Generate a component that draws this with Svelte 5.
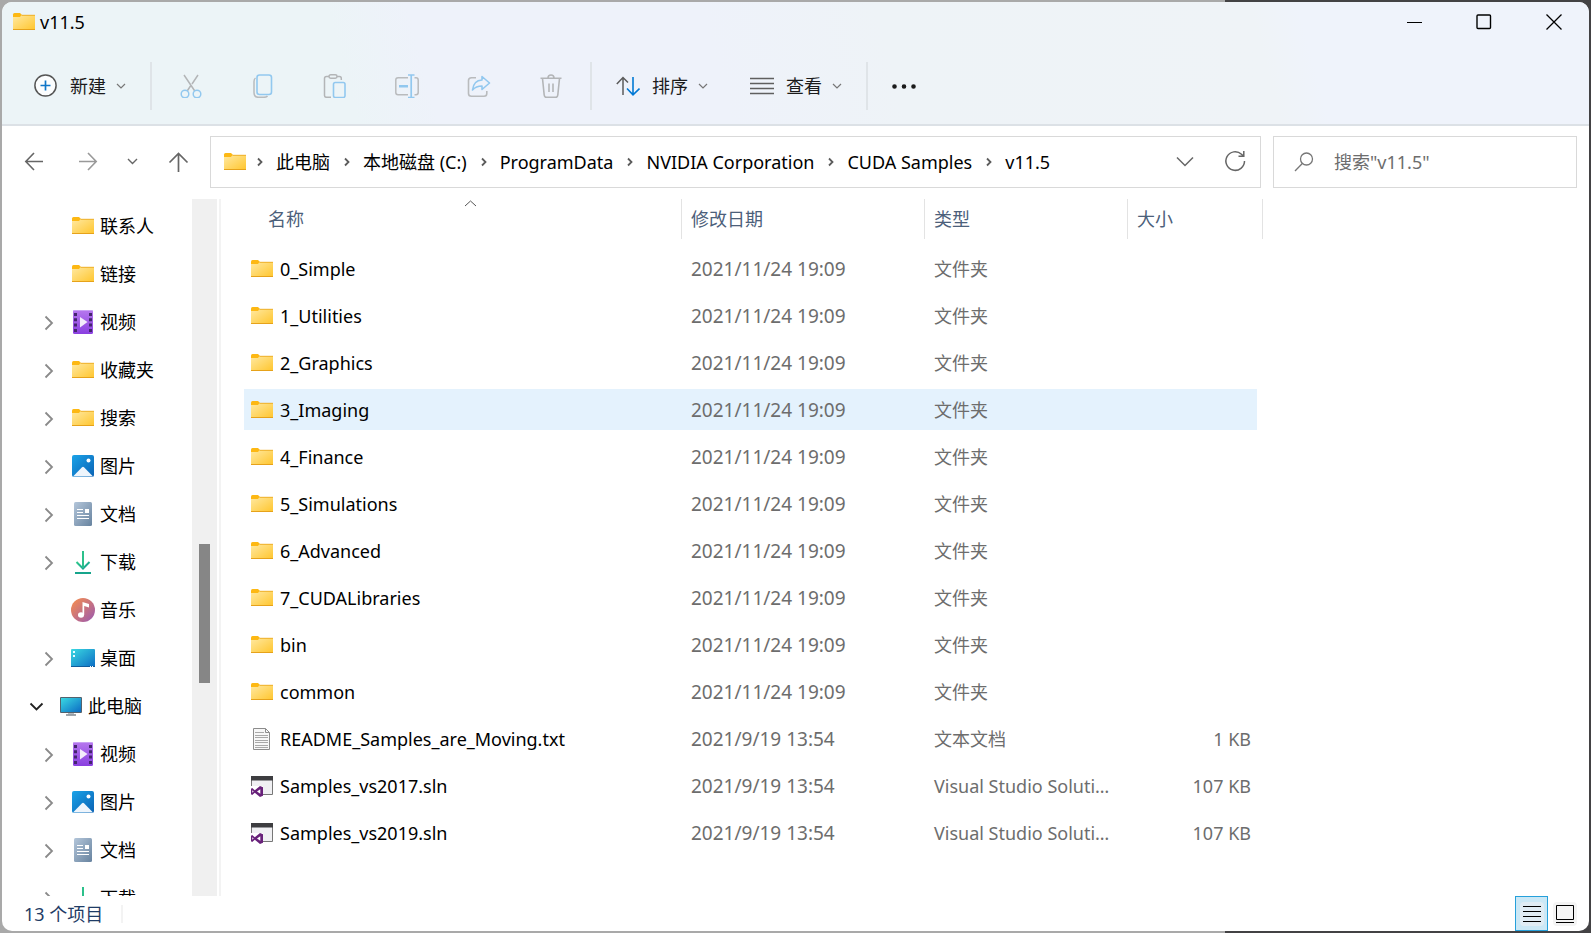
<script>
	const path = ['此电脑', '本地磁盘 (C:)', 'ProgramData', 'NVIDIA Corporation', 'CUDA Samples', 'v11.5']

	const tree = [
		{ name: '联系人', icon: 'folder', level: 1, state: 'leaf' },
		{ name: '链接', icon: 'folder', level: 1, state: 'leaf' },
		{ name: '视频', icon: 'video', level: 1, state: 'closed' },
		{ name: '收藏夹', icon: 'folder', level: 1, state: 'closed' },
		{ name: '搜索', icon: 'folder', level: 1, state: 'closed' },
		{ name: '图片', icon: 'picture', level: 1, state: 'closed' },
		{ name: '文档', icon: 'document', level: 1, state: 'closed' },
		{ name: '下载', icon: 'download', level: 1, state: 'closed' },
		{ name: '音乐', icon: 'music', level: 1, state: 'leaf' },
		{ name: '桌面', icon: 'desktop', level: 1, state: 'closed' },
		{ name: '此电脑', icon: 'pc', level: 0, state: 'open' },
		{ name: '视频', icon: 'video', level: 1, state: 'closed' },
		{ name: '图片', icon: 'picture', level: 1, state: 'closed' },
		{ name: '文档', icon: 'document', level: 1, state: 'closed' },
		{ name: '下载', icon: 'download', level: 1, state: 'closed' }
	]

	const folders = [
		'0_Simple',
		'1_Utilities',
		'2_Graphics',
		'3_Imaging',
		'4_Finance',
		'5_Simulations',
		'6_Advanced',
		'7_CUDALibraries',
		'bin',
		'common'
	]

	const files = [
		...folders.map((name) => ({ name, icon: 'folder', date: '2021/11/24 19:09', type: '文件夹', size: '' })),
		{ name: 'README_Samples_are_Moving.txt', icon: 'text', date: '2021/9/19 13:54', type: '文本文档', size: '1 KB' },
		{ name: 'Samples_vs2017.sln', icon: 'sln', date: '2021/9/19 13:54', type: 'Visual Studio Solution', size: '107 KB' },
		{ name: 'Samples_vs2019.sln', icon: 'sln', date: '2021/9/19 13:54', type: 'Visual Studio Solution', size: '107 KB' }
	]

	const tools = [
		{ icon: 'cut', label: '剪切' },
		{ icon: 'copy', label: '复制' },
		{ icon: 'paste', label: '粘贴' },
		{ icon: 'rename', label: '重命名' },
		{ icon: 'share', label: '共享' },
		{ icon: 'trash', label: '删除' }
	]

	let active = $state('3_Imaging')
	let query = $state('')
</script>

{#snippet icon(name)}
	<svg class="icon" width="24" height="24" viewBox="0 0 24 24" fill="none" aria-hidden="true">
		{#if name === 'folder'}
			<path d="M1 4.500Q1 3 2.500 3H8L10 5V9H1Z" fill="#fdb813" />
			<path d="M1 7H8L9.500 5H22.500Q23 5 23 5.500V19.500H1Z" fill="url(#g-folder)" />
			<path d="M9.500 5.300H23" stroke="#eeb02a" />
			<path d="M1 19.500H23" stroke="#e6a21a" />
		{:else if name === 'video'}
			<rect x="2" width="20" height="24" rx="1.500" fill="url(#g-video)" />
			<path d="M2.500 .5H21.500" stroke="#c9a0f5" />
			<path d="M4.500 3V22M19.500 3V22" stroke="#44256f" stroke-width="3" stroke-dasharray="3 2.300" />
			<path d="M9 7V17.500L16.500 12Z" fill="#f3ecfb" />
		{:else if name === 'picture'}
			<rect x="1" y="1" width="22" height="22" rx="2" fill="url(#g-picture)" />
			<path d="M2 22.500L11 13.300Q12 12.300 13 13.300L22 22.500Z" fill="#eef5fc" />
			<circle cx="17.500" cy="6.500" r="2" fill="#fff" />
		{:else if name === 'document'}
			<rect x="3" width="18" height="24" rx="1.500" fill="url(#g-document)" />
			<path d="M6 7.500H12M6 10.500H12M6 13.500H18M6 16.500H18" stroke="#fff" />
			<path d="M14 7H18V11H14Z" fill="#fff" />
		{:else if name === 'download'}
			<path d="M5.500 12L12 18.500L18.500 12" stroke="url(#g-download)" stroke-width="2" />
			<path d="M11 1H13V18H11Z" fill="#2cc08b" />
			<path d="M4 23H20" stroke="#16a58c" stroke-width="2" />
		{:else if name === 'music'}
			<circle cx="12" cy="12" r="12" fill="url(#g-music)" />
			<ellipse cx="10" cy="17" rx="3" ry="2.700" fill="#fff" />
			<path d="M11.500 4L18 6V9.500L13.200 8V17H11.500Z" fill="#fff" />
		{:else if name === 'desktop'}
			<rect y="3" width="24" height="18" rx="1" fill="url(#g-screen)" />
			<path d="M2 5h2v2H2zM2 9h2v2H2z" fill="#e8fbff" />
			<path d="M0 20.500H24" stroke="#0f5c9c" />
			<path d="M19 20.500H23" stroke="#fff" stroke-dasharray="1 1" />
		{:else if name === 'pc'}
			<rect x="1" y="3" width="22" height="16" rx="1" fill="#53626e" />
			<rect x="2" y="4" width="20" height="14" fill="url(#g-screen)" />
			<path d="M9 19H15V20.500H9Z" fill="#b3bac0" />
			<path d="M7 21H17" stroke="#7f8991" stroke-width="1.500" />
		{:else if name === 'text'}
			<path d="M3.500 1.500H15.500L19.500 5.500V22.500H3.500Z" fill="#f7f7f7" stroke="#8c8c8c" />
			<path d="M15.500 1.500V5.500H19.500" stroke="#8c8c8c" />
			<path d="M5 5.500H14M5 8.500H18M5 10.500H18M5 13.500H18M5 15.500H18M5 18.500H18M5 20.500H18" stroke="#a8a8a8" />
		{:else if name === 'sln'}
			<path d="M1.500 2.500H22.500V20.500H1.500Z" fill="#f0f0f3" stroke="#777" />
			<path d="M1 2H23V6.500H1Z" fill="#3d3d40" />
			<path d="M0 12H13V24H0Z" fill="#fff" />
			<path d="M10 12L13 13.300V21.700L10 23L4.800 18.800L2.200 21L1 20.300V14.700L2.200 14L4.800 16.200Z" fill="#68217a" />
			<path d="M10.300 15.200V19.800L7 17.500ZM2.300 16.200V18.800L3.700 17.500Z" fill="#fff" />
		{:else if name === 'cut'}
			<path d="M5 1L15.800 17M19 1L13 10M11.500 12L8.200 17" stroke="#b3b5b7" stroke-width="1.500" />
			<circle cx="6" cy="20" r="3.800" stroke="#92c8ef" stroke-width="1.500" />
			<circle cx="18" cy="20" r="3.800" stroke="#92c8ef" stroke-width="1.500" />
		{:else if name === 'copy'}
			<path d="M4.500 4Q3 5 3 7.500V18.500Q3 23.300 7.500 23.300H13Q15.500 23.300 16.500 22" stroke="#b9bbbd" stroke-width="1.500" />
			<rect x="6" y="1" width="14.500" height="19.500" rx="2.500" stroke="#92c8ef" stroke-width="1.600" />
		{:else if name === 'paste'}
			<path d="M6 2.500H3.500Q1.500 2.500 1.500 4.500V21.500Q1.500 23.300 3.500 23.300H8M14 2.500H16.500Q18.300 2.500 18.300 4.500V6" stroke="#b3b5b7" stroke-width="1.500" />
			<rect x="6" y=".8" width="8" height="3.400" rx="1.700" stroke="#b3b5b7" stroke-width="1.500" />
			<rect x="10.500" y="8.500" width="11.500" height="15" rx="1.700" stroke="#92c8ef" stroke-width="1.600" />
		{:else if name === 'rename'}
			<path d="M13 3.800H3Q.8 3.800 .8 6V18.500Q.8 20.700 3 20.700H13M19.500 3.800H21Q23.200 3.800 23.200 6V18.500Q23.200 20.700 21 20.700H19.500" stroke="#b9bbbd" stroke-width="1.500" />
			<path d="M16.200 1V24M13 1H19.500M13 23.500H19.500" stroke="#92c8ef" stroke-width="1.700" />
			<path d="M4 12.200H13" stroke="#92c8ef" stroke-width="2.600" />
		{:else if name === 'share'}
			<path d="M9 3.800H4.500Q1.500 3.800 1.500 6.500V19.500Q1.500 22.300 4.500 22.300H17Q19.800 22.300 19.800 19.500V17" stroke="#b9bbbd" stroke-width="1.600" />
			<path d="M15 2.500L22.500 9L15 15.500V12Q9 12 5.500 16Q6.500 6.500 15 6Z" stroke="#92c8ef" stroke-width="1.600" stroke-linejoin="round" />
		{:else if name === 'trash'}
			<path d="M1.500 4.300H22.500M9 4Q9 1 12 1Q15 1 15 4M3.500 4.500L5.200 21Q5.500 23.400 7.500 23.400H16.500Q18.500 23.400 18.800 21L20.500 4.500M10 9.500V18M14 9.500V18" stroke="#b3b5b7" stroke-width="1.600" />
		{:else if name === 'new'}
			<circle cx="11.500" cy="11.500" r="10.600" fill="#fbfdfe" stroke="#555" stroke-width="1.500" />
			<path d="M11.500 6.500V16.500M6.500 11.500H16.500" stroke="#0f76c8" stroke-width="1.700" />
		{:else if name === 'sort'}
			<path d="M7 21V3.500M.8 10L7 3.500L12 8.500" stroke="#5b5b5b" stroke-width="1.500" />
			<path d="M17 3V21M11 14.500L17 20.800L23.500 14.500" stroke="#0078d4" stroke-width="1.600" />
		{:else if name === 'view'}
			<path d="M0 4.500H24M0 9.500H24M0 14.500H24M0 19.500H24" stroke="#5f5f5f" stroke-width="1.500" />
		{:else if name === 'more'}
			<path d="M2.500 12.500h.01M12 12.500h.01M21.500 12.500h.01" stroke="#1b1b1b" stroke-width="4.600" stroke-linecap="round" />
		{:else if name === 'back'}
			<path d="M21 11.500H4M12 3L3.800 11.500L12 20" stroke="#666" stroke-width="1.600" />
		{:else if name === 'forward'}
			<path d="M3 11.500H20M12 3L20.200 11.500L12 20" stroke="#999" stroke-width="1.600" />
		{:else if name === 'up'}
			<path d="M12.500 22V3.500M3.500 12.500L12.500 3.500L21.500 12.500" stroke="#666" stroke-width="1.700" />
		{:else if name === 'refresh'}
			<path d="M21.500 11A9.300 9.300 0 1 1 18.500 4.200L20.500 6M20.800 1V6.200H15.500" stroke="#666" stroke-width="1.500" />
		{:else if name === 'search'}
			<circle cx="14.500" cy="9" r="6" stroke="#777" stroke-width="1.300" />
			<path d="M10.300 13.500L3 21" stroke="#777" stroke-width="1.300" />
		{:else if name === 'closed'}
			<path d="M8.500 6.500L15 13L8.500 19.500" stroke="#8a8a8a" stroke-width="1.800" />
		{:else if name === 'open'}
			<path d="M5.500 9.500L11.500 15.500L17.500 9.500" stroke="#222" stroke-width="1.800" />
		{:else if name === 'details'}
			<path d="M3 4.500H21M3 9.500H21M3 14.500H21M3 19.500H21" stroke="#000" />
		{:else if name === 'tiles'}
			<path d="M3.500 3.500H20.500V17.500H3.500Z" stroke="#000" fill="#f6f6f6" />
			<path d="M3 20.500H21" stroke="#000" />
		{/if}
	</svg>
{/snippet}

{#snippet caret()}
	<svg width="10" height="10" viewBox="0 0 10 10" fill="none" aria-hidden="true">
		<path d="M1 3L5 7L9 3" stroke="#777" stroke-width="1.200" />
	</svg>
{/snippet}

<svg class="defs" width="0" height="0" aria-hidden="true">
	<defs>
		<linearGradient id="g-folder" x2="1" y2="1">
			<stop stop-color="#ffe9a2" />
			<stop offset="1" stop-color="#ffc62f" />
		</linearGradient>
		<linearGradient id="g-video" x2="0" y2="1">
			<stop stop-color="#b678ee" />
			<stop offset="1" stop-color="#8a3fe0" />
		</linearGradient>
		<linearGradient id="g-picture" x2="1" y2="1">
			<stop stop-color="#1ba3e8" />
			<stop offset="1" stop-color="#0a62b4" />
		</linearGradient>
		<linearGradient id="g-document" x2="1" y2="1">
			<stop stop-color="#b4c6da" />
			<stop offset="1" stop-color="#67839f" />
		</linearGradient>
		<linearGradient id="g-download" x2="1" y2="1">
			<stop stop-color="#2fc98b" />
			<stop offset="1" stop-color="#129b94" />
		</linearGradient>
		<linearGradient id="g-music" x1=".1" y1=".1" x2=".9" y2=".9">
			<stop stop-color="#f08a55" />
			<stop offset="1" stop-color="#a25da8" />
		</linearGradient>
		<linearGradient id="g-screen" x2="1" y2="1">
			<stop stop-color="#3ad9e2" />
			<stop offset="1" stop-color="#0c6cc4" />
		</linearGradient>
	</defs>
</svg>

<div class="backdrop">
	<div class="window">
		<header>
			<div class="titlebar">
				{@render icon('folder')}
				<span class="title">v11.5</span>
				<button class="caption" aria-label="最小化">
					<svg width="16" height="16" viewBox="0 0 16 16"><path d="M1 8.500H16" stroke="#000" /></svg>
				</button>
				<button class="caption" aria-label="最大化">
					<svg width="16" height="16" viewBox="0 0 16 16" fill="none">
						<rect x="1" y="1" width="13.500" height="13.500" rx="1" stroke="#000" stroke-width="1.400" />
					</svg>
				</button>
				<button class="caption" aria-label="关闭">
					<svg width="16" height="16" viewBox="0 0 16 16">
						<path d="M.5 .5L15.500 15.500M15.500 .5L.5 15.500" stroke="#000" stroke-width="1.300" />
					</svg>
				</button>
			</div>

			<div class="toolbar">
				<button class="command">{@render icon('new')}<span>新建</span>{@render caret()}</button>
				<div class="separator"></div>
				{#each tools as tool}
					<button class="tool" aria-label={tool.label} disabled>{@render icon(tool.icon)}</button>
				{/each}
				<div class="separator"></div>
				<button class="command">{@render icon('sort')}<span>排序</span>{@render caret()}</button>
				<button class="command">{@render icon('view')}<span>查看</span>{@render caret()}</button>
				<div class="separator"></div>
				<button class="command" aria-label="查看更多">{@render icon('more')}</button>
			</div>
		</header>

		<div class="navigation">
			<button class="nav" aria-label="返回">{@render icon('back')}</button>
			<button class="nav" aria-label="前进">{@render icon('forward')}</button>
			<button class="nav recent" aria-label="最近浏览的位置">
				<svg width="12" height="12" viewBox="0 0 12 12" fill="none">
					<path d="M1 3L5.500 7.500L10 3" stroke="#666" stroke-width="1.400" />
				</svg>
			</button>
			<button class="nav" aria-label="上移">{@render icon('up')}</button>

			<nav class="address">
				{@render icon('folder')}
				<ol>
					{#each path as part}
						<li>
							<svg width="6" height="10" viewBox="0 0 6 10" fill="none" aria-hidden="true">
								<path d="M1 1.500L4.500 5L1 8.500" stroke="#5c5c5c" stroke-width="1.800" />
							</svg>
							<a href="#{part}">{part}</a>
						</li>
					{/each}
				</ol>
				<button class="address-button" aria-label="以前的位置">
					<svg width="18" height="18" viewBox="0 0 18 18" fill="none">
						<path d="M1 4.500L9 12.500L17 4.500" stroke="#666" stroke-width="1.500" />
					</svg>
				</button>
				<button class="address-button" aria-label="刷新">{@render icon('refresh')}</button>
			</nav>

			<label class="search">
				{@render icon('search')}
				<input type="text" placeholder={'搜索"v11.5"'} aria-label="搜索" bind:value={query} />
			</label>
		</div>

		<main>
			<aside>
				<ul class="tree">
					{#each tree as item}
						<li class:nested={item.level === 1}>
							{#if item.state === 'leaf'}
								<span class="expander"></span>
							{:else}
								<button class="expander" aria-label="展开 {item.name}">{@render icon(item.state)}</button>
							{/if}
							<a href="#{item.name}">{@render icon(item.icon)}<span>{item.name}</span></a>
						</li>
					{/each}
				</ul>
				<div class="scrollbar">
					<div class="thumb"></div>
				</div>
			</aside>

			<section>
				<table>
					<colgroup>
						<col class="col-name" />
						<col class="col-date" />
						<col class="col-type" />
						<col class="col-size" />
					</colgroup>
					<thead>
						<tr>
							<th>
								<button class="column first">
									名称
									<svg class="sorted" width="12" height="8" viewBox="0 0 12 8" fill="none" aria-hidden="true">
										<path d="M2 7L7.500 2L13 7" stroke="#555" />
									</svg>
								</button>
							</th>
							<th><button class="column">修改日期</button></th>
							<th><button class="column">类型</button></th>
							<th><button class="column">大小</button></th>
						</tr>
					</thead>
					<tbody>
						{#each files as file}
							<tr class:active={active === file.name} onclick={() => (active = file.name)}>
								<td class="name"><span>{@render icon(file.icon)}{file.name}</span></td>
								<td class="date">{file.date}</td>
								<td class="type">{file.type}</td>
								<td class="size">{file.size}</td>
							</tr>
						{/each}
					</tbody>
				</table>
			</section>
		</main>

		<footer>
			<span class="count">13 个项目</span>
			<button class="layout selected" aria-label="详细信息"><span>{@render icon('details')}</span></button>
			<button class="layout" aria-label="大缩略图"><span>{@render icon('tiles')}</span></button>
		</footer>
	</div>
</div>

<style>
	:global(body) {
		margin: 0;
	}

	.defs {
		position: absolute;
	}

	.backdrop {
		box-sizing: border-box;
		height: 100vh;
		padding: 2px;
		background: linear-gradient(to right, #a9a9a9 77%, #434244 77%);
		font-family: 'Noto Sans', 'Noto Sans CJK SC', sans-serif;
		font-size: 18px;
		line-height: 24px;
		color: #000;
	}

	.window {
		height: 100%;
		display: flex;
		flex-direction: column;
		border-radius: 10px;
		background: #fff;
		overflow: hidden;
	}

	button,
	input {
		font: inherit;
		color: inherit;
		border: none;
		background: none;
		padding: 0;
		margin: 0;
	}

	a {
		color: inherit;
		text-decoration: none;
		white-space: nowrap;
	}

	svg {
		display: block;
		flex: none;
	}

	header {
		background: linear-gradient(75deg, #ecf4f7 22%, #eef2fa 27%, #eef2fa 45%, #eef3f7 56%, #eff3f7 79%, #eff3fb 82%);
		border-bottom: 2px solid #dce1e6;
	}

	.titlebar {
		display: flex;
		align-items: center;
		height: 40px;
		padding-left: 10px;
	}

	.title {
		flex: 1;
		padding-left: 4px;
	}

	.caption {
		width: 70px;
		height: 40px;
		display: flex;
		align-items: center;
		justify-content: center;
	}

	.toolbar {
		display: flex;
		align-items: center;
		padding: 20px 0 14px 11px;
		color: #1b1b1b;
	}

	.command {
		display: flex;
		align-items: center;
		height: 48px;
		padding: 0 21px;
	}

	.command span {
		padding: 0 10px 0 12px;
	}

	.tool {
		height: 48px;
		padding: 0 24px;
	}

	.separator {
		width: 2px;
		height: 48px;
		margin: 0 3px;
		background: #dfe4e8;
	}

	.navigation {
		display: flex;
		padding: 10px 12px 11px 5px;
	}

	.nav {
		width: 54px;
		display: flex;
		align-items: center;
		justify-content: center;
	}

	.nav.recent {
		width: 36px;
	}

	.address {
		flex: 1;
		display: flex;
		align-items: center;
		box-sizing: border-box;
		height: 52px;
		margin: 0 12px 0 5px;
		padding-left: 12px;
		border: 1px solid #d9d9d9;
	}

	.address ol {
		flex: 1;
		display: flex;
		gap: 14px;
		margin: 0;
		padding: 0 0 0 10px;
		list-style: none;
	}

	.address li {
		display: flex;
		align-items: center;
		gap: 13px;
	}

	.address-button {
		width: 50px;
		height: 50px;
		display: flex;
		align-items: center;
		justify-content: center;
	}

	.search {
		display: flex;
		align-items: center;
		box-sizing: border-box;
		width: 304px;
		padding: 0 18px;
		border: 1px solid #d9d9d9;
	}

	.search input {
		flex: 1;
		min-width: 0;
		padding-left: 18px;
		outline: none;
	}

	.search input::placeholder {
		color: #6d6d6d;
		opacity: 1;
	}

	main {
		flex: 1;
		min-height: 0;
		display: flex;
	}

	aside {
		width: 217px;
		display: flex;
		border-right: 2px solid #f3f3f3;
	}

	.tree {
		flex: 1;
		margin: 0;
		padding: 3px 0 0 23px;
		list-style: none;
		overflow: hidden;
	}

	.tree li {
		display: flex;
		align-items: center;
		height: 48px;
	}

	.tree li.nested {
		padding-left: 12px;
	}

	.expander {
		width: 24px;
		height: 24px;
		margin-right: 10px;
	}

	.tree a {
		display: flex;
		align-items: center;
		gap: 5px;
	}

	.scrollbar {
		width: 25px;
		margin-right: 2px;
		background: #f0f0f0;
		display: grid;
		grid-template-rows: 345fr 139fr 213fr;
		justify-items: center;
	}

	.thumb {
		grid-row: 2;
		width: 11px;
		background: #868686;
	}

	section {
		flex: 1;
		min-width: 0;
		padding-left: 23px;
		overflow: hidden;
	}

	table {
		width: 1019px;
		table-layout: fixed;
		border-collapse: separate;
		border-spacing: 0;
	}

	.col-name {
		width: 438px;
	}

	.col-date {
		width: 243px;
	}

	.col-type {
		width: 203px;
	}

	.col-size {
		width: 135px;
	}

	th {
		padding: 0 0 6px;
		font-weight: normal;
	}

	.column {
		position: relative;
		display: block;
		box-sizing: border-box;
		width: 100%;
		height: 40px;
		padding-left: 9px;
		border-right: 1px solid #e3e3e3;
		color: #4c607a;
		text-align: left;
	}

	.column.first {
		padding-left: 24px;
	}

	.sorted {
		position: absolute;
		top: 0;
		left: 50%;
		overflow: visible;
	}

	td {
		box-sizing: border-box;
		height: 47px;
		padding: 0 0 0 9px;
		border: 0 solid transparent;
		border-width: 3px 0;
		background-clip: padding-box;
		color: #6d6d6d;
		white-space: nowrap;
	}

	td.name {
		padding-left: 6px;
		color: #000;
	}

	td.name span {
		display: flex;
		align-items: center;
		gap: 6px;
	}

	td.date {
		font-size: 19px;
	}

	td.type {
		padding-right: 12px;
		overflow: hidden;
		text-overflow: ellipsis;
	}

	td.size {
		padding-right: 6px;
		border-right-width: 6px;
		text-align: right;
	}

	tr.active td {
		background-color: #e4f2fd;
	}

	footer {
		display: flex;
		align-items: center;
		height: 35px;
		padding: 0 8px 0 22px;
	}

	.count {
		margin-right: auto;
		padding-right: 18px;
		border-right: 2px solid #f3f3f3;
		line-height: 18px;
		color: #1f3c66;
	}

	.layout {
		box-sizing: border-box;
		width: 33px;
		height: 35px;
		display: flex;
		align-items: center;
		justify-content: center;
		border: 1px solid transparent;
	}

	.layout span {
		border-radius: 4px;
		background: #f4f4f4;
	}

	.layout.selected {
		border-color: #26a0da;
		background: #cbe8f6;
	}

	.layout.selected span {
		background: #e0ecf4;
	}
</style>
